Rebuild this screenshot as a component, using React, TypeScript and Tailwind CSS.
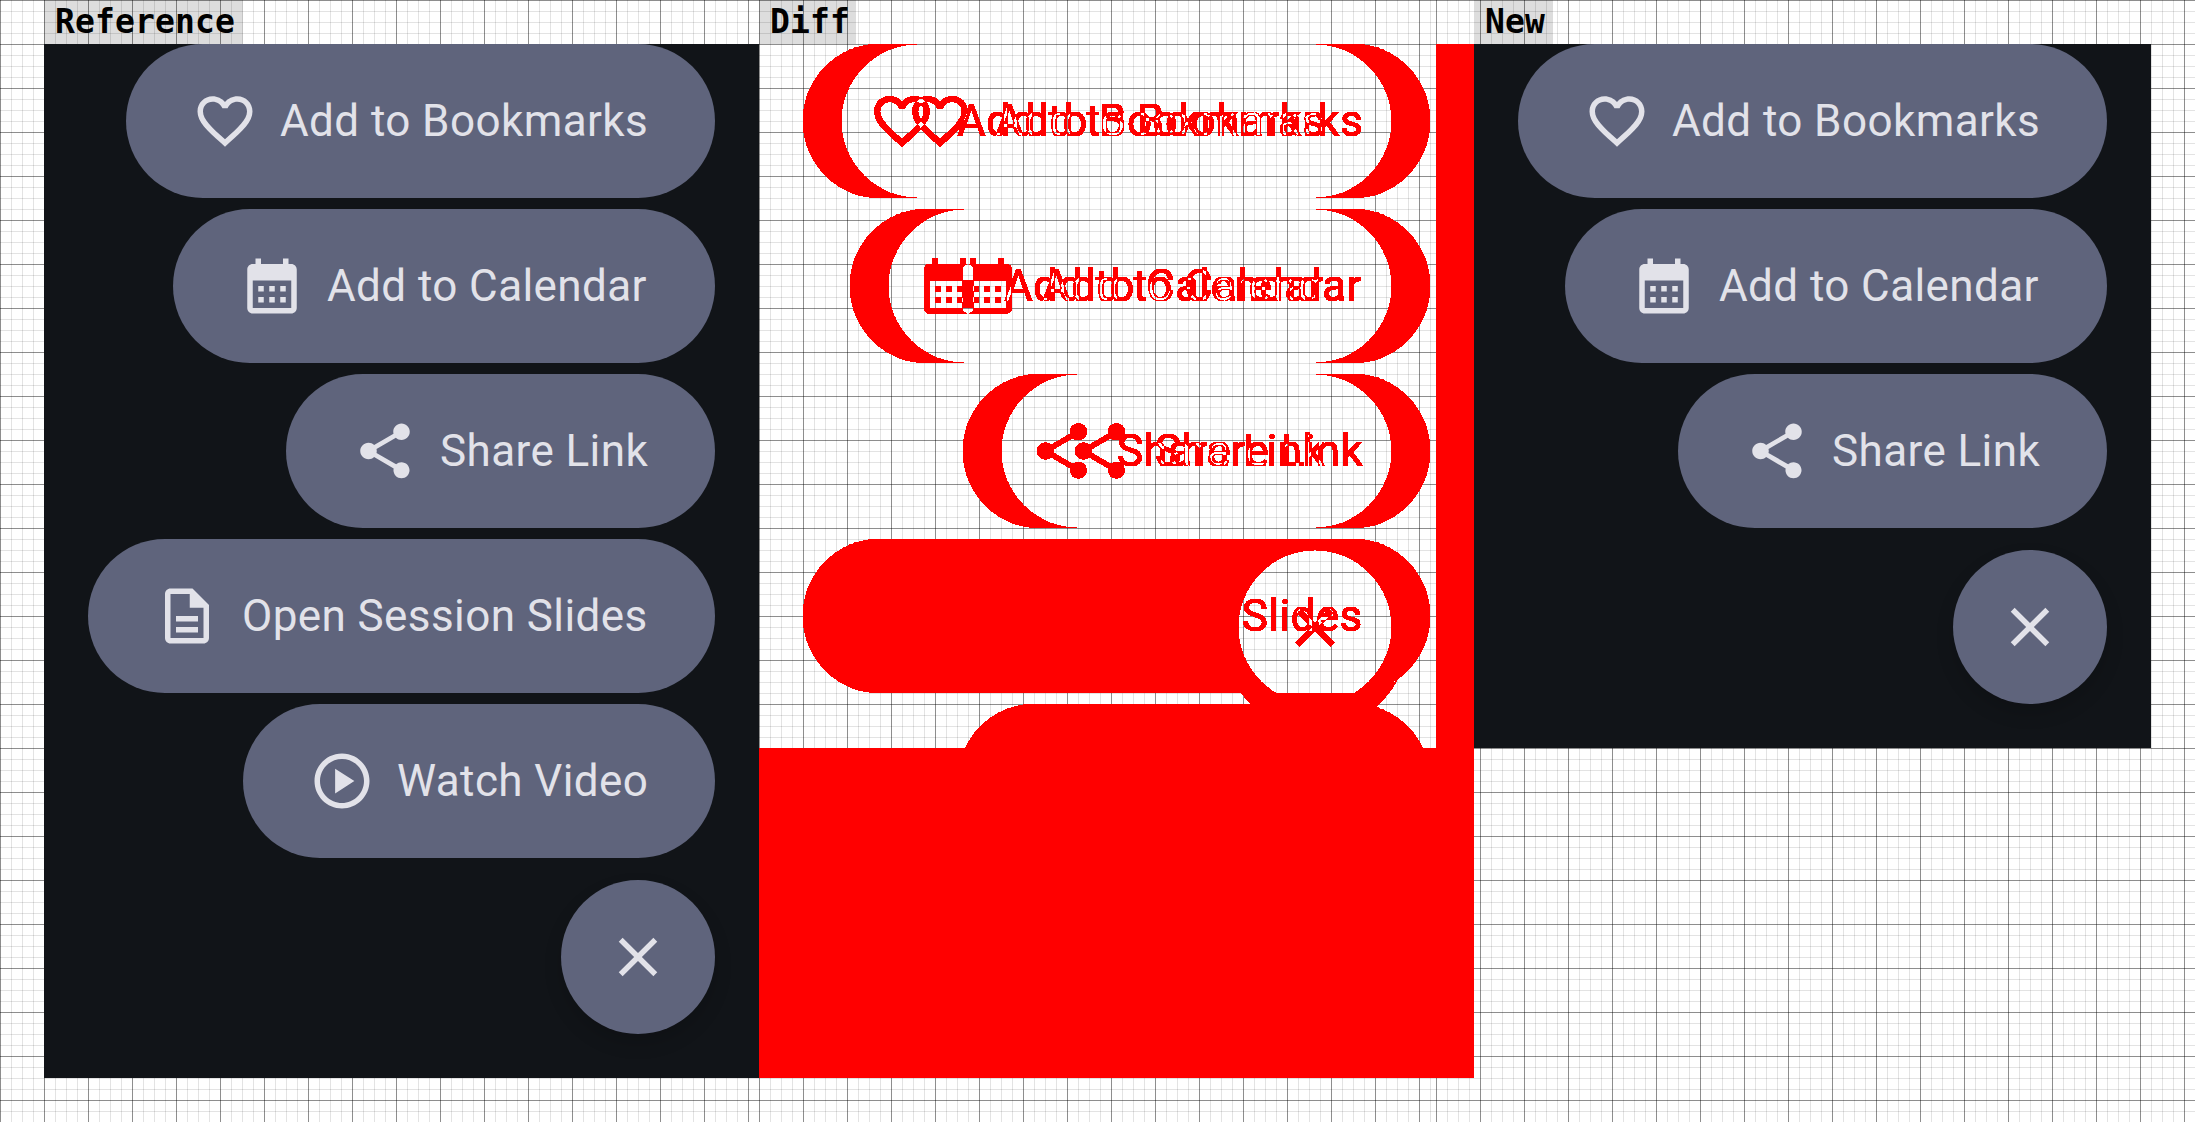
import React from "react";

const ICONS = {
  heart:
    "M16.5 3c-1.74 0-3.41.81-4.5 2.09C10.91 3.81 9.24 3 7.5 3 4.42 3 2 5.42 2 8.5c0 3.78 3.4 6.86 8.55 11.54L12 21.35l1.45-1.32C18.6 15.36 22 12.28 22 8.5 22 5.42 19.58 3 16.5 3zm-4.4 15.55l-.1.1-.1-.1C7.14 14.24 4 11.39 4 8.5 4 6.5 5.5 5 7.5 5c1.54 0 3.04.99 3.57 2.36h1.87C13.46 5.99 14.96 5 16.5 5c2 0 3.5 1.5 3.5 3.5 0 2.89-3.14 5.74-7.9 10.05z",
  calendar:
    "M19 4h-1V2h-2v2H8V2H6v2H5c-1.11 0-1.99.9-1.99 2L3 20c0 1.1.89 2 2 2h14c1.1 0 2-.9 2-2V6c0-1.1-.9-2-2-2zm0 16H5V10h14v10zM9 14H7v-2h2v2zm4 0h-2v-2h2v2zm4 0h-2v-2h2v2zm-8 4H7v-2h2v2zm4 0h-2v-2h2v2zm4 0h-2v-2h2v2z",
  share:
    "M18 16.08c-.76 0-1.44.3-1.96.77L8.91 12.7c.05-.23.09-.46.09-.7s-.04-.47-.09-.7l7.05-4.11c.54.5 1.25.81 2.04.81 1.66 0 3-1.34 3-3s-1.34-3-3-3-3 1.34-3 3c0 .24.04.47.09.7L8.04 9.81C7.5 9.31 6.79 9 6 9c-1.66 0-3 1.34-3 3s1.34 3 3 3c.79 0 1.5-.31 2.04-.81l7.12 4.16c-.05.21-.08.43-.08.65 0 1.61 1.31 2.92 2.92 2.92s2.92-1.31 2.92-2.92-1.31-2.92-2.92-2.92z",
  description:
    "M8 16h8v2H8v-2zm0-4h8v2H8v-2zm6-10H6c-1.1 0-2 .9-2 2v16c0 1.1.89 2 1.99 2H18c1.1 0 2-.9 2-2V8l-6-6zm4 18H6V4h7v5h5v11z",
  play: "M12 2C6.48 2 2 6.48 2 12s4.48 10 10 10 10-4.48 10-10S17.52 2 12 2zm0 18c-4.41 0-8-3.59-8-8s3.59-8 8-8 8 3.59 8 8-3.59 8-8 8zm-2.5-3.5l7-4.5-7-4.5v9z",
  close:
    "M19 6.41L17.59 5 12 10.59 6.41 5 5 6.41 10.59 12 5 17.59 6.41 19 12 13.41 17.59 19 19 17.59 13.41 12 19 6.41z",
};

function Icon({ name }: { name: keyof typeof ICONS }) {
  return (
    <svg viewBox="0 0 24 24" className="size-[66px] shrink-0" fill="currentColor" aria-hidden="true">
      <path d={ICONS[name]} />
    </svg>
  );
}

type Action = { icon: keyof typeof ICONS; label: string; width: string };

const ACTIONS: Action[] = [
  { icon: "heart", label: "Add to Bookmarks", width: "w-[589px]" },
  { icon: "calendar", label: "Add to Calendar", width: "w-[542px]" },
  { icon: "share", label: "Share Link", width: "w-[429px]" },
  { icon: "description", label: "Open Session Slides", width: "w-[627px]" },
  { icon: "play", label: "Watch Video", width: "w-[472px]" },
];

function Menu({ size, actions }: { size: string; actions: Action[] }) {
  return (
    <div
      className={`${size} flex flex-col items-end gap-[11px] overflow-hidden bg-[#111418] pr-[44px] font-[Roboto,sans-serif] text-[#e2e2e9]`}
    >
      {actions.map((a) => (
        <div
          key={a.label}
          className={`${a.width} flex h-[154px] shrink-0 items-center gap-[22px] rounded-full bg-[#5f647c] pl-[66px]`}
        >
          <Icon name={a.icon} />
          <span className="text-[44px] leading-[66px] tracking-[0.41px] whitespace-nowrap">{a.label}</span>
        </div>
      ))}
      <div className="mt-[11px] flex size-[154px] shrink-0 items-center justify-center rounded-full bg-[#5f647c] shadow-[0_9px_18px_rgba(0,0,0,0.15)]">
        <Icon name="close" />
      </div>
    </div>
  );
}

const ReferenceMenu = () => <Menu size="h-[1034px] w-[715px]" actions={ACTIONS} />;
const NewMenu = () => <Menu size="h-[704px] w-[677px]" actions={ACTIONS.slice(0, 3)} />;

function Label({ width, children }: { width: string; children: React.ReactNode }) {
  return (
    <div className="flex h-[44px]">
      <div
        className={`${width} bg-black/[0.133] pl-[11px] font-['DejaVu_Sans_Mono',monospace] text-[33px] leading-[44px] font-bold tracking-[0.13px] text-black`}
      >
        {children}
      </div>
    </div>
  );
}

/* 11px minor lines with a darker line on every fourth one */
const GRID =
  "bg-[linear-gradient(to_right,#00000060_1px,transparent_1px),linear-gradient(to_bottom,#00000060_1px,transparent_1px),linear-gradient(to_right,#0000001c_1px,transparent_1px),linear-gradient(to_bottom,#0000001c_1px,transparent_1px)] bg-[size:44px_44px,44px_44px,11px_11px,11px_11px]";

export default function App() {
  return (
    <div className="flex h-[1122px] w-[2195px] overflow-hidden bg-white">
      <section className={`${GRID} w-[759px] shrink-0 pl-[44px]`}>
        <Label width="w-[199px]">Reference</Label>
        <ReferenceMenu />
      </section>

      <section className={`${GRID} relative z-10 w-[677px] shrink-0`}>
        <Label width="w-[97px]">Diff</Label>
        {/* Both menus are subtracted, then every differing pixel becomes red */}
        <div className="isolate grid h-[1034px] w-[715px] [filter:url(#mark-changes)]">
          <div className="col-start-1 row-start-1">
            <ReferenceMenu />
          </div>
          <div className="col-start-1 row-start-1 h-[704px] w-[677px] mix-blend-difference">
            <NewMenu />
          </div>
        </div>
      </section>

      <section className={`${GRID} w-[759px] shrink-0 pl-[38px]`}>
        <Label width="w-[79px]">New</Label>
        <NewMenu />
      </section>

      <svg className="absolute size-0" aria-hidden="true">
        <filter id="mark-changes" x="0" y="0" width="1" height="1" colorInterpolationFilters="sRGB">
          <feColorMatrix type="matrix" values="0 0 0 0 1  0 0 0 0 0  0 0 0 0 0  255 255 255 0 -2" />
        </filter>
      </svg>
    </div>
  );
}
